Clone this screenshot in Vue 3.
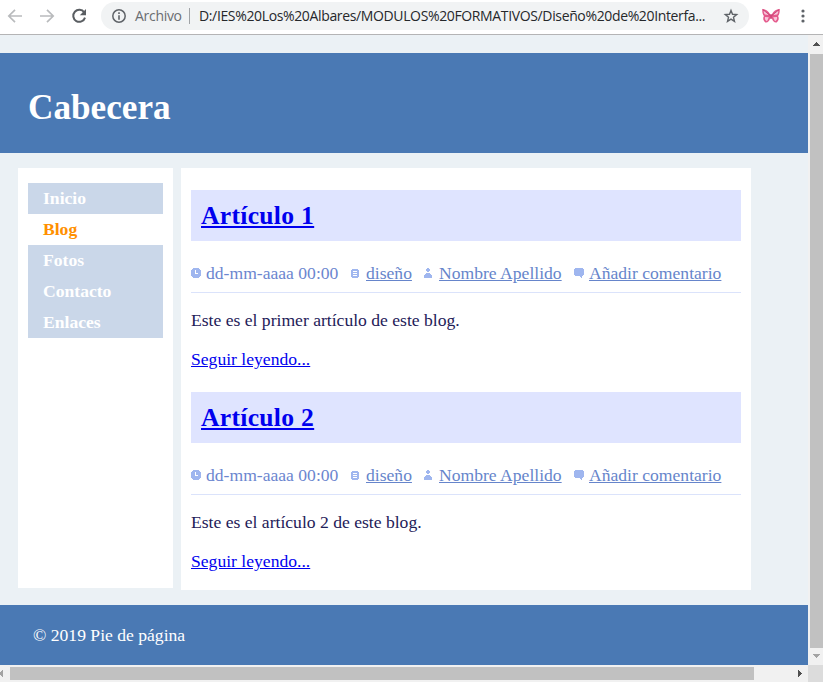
<script setup>
const menu = ['Inicio', 'Blog', 'Fotos', 'Contacto', 'Enlaces']
const articles = [
  { title: 'Artículo 1', text: 'Este es el primer artículo de este blog.' },
  { title: 'Artículo 2', text: 'Este es el artículo 2 de este blog.' },
]
</script>

<template>
  <div class="window">
    <div class="toolbar">
      <svg class="nav" viewBox="0 0 101 34" width="101" height="34" fill="none">
        <g stroke="#b9bbbd" stroke-width="1.7">
          <path d="M22 16H9.5M15 9.8 8.8 16l6.2 6.2" />
          <path d="M40 16h12.5M47 9.8l6.2 6.2-6.2 6.2" />
        </g>
        <path d="M84.2 12.4A6 6 0 1 0 85 17.6" stroke="#5a5e62" stroke-width="2" />
        <path d="M86 9v6.2h-6.2z" fill="#5a5e62" />
      </svg>
      <div class="address">
        <svg class="info" viewBox="0 0 14 14" width="14" height="14">
          <circle cx="7" cy="7" r="6.2" fill="none" stroke="#5f6368" stroke-width="1.5" />
          <path d="M6.2 3.3h1.6v1.6H6.2zM6.2 6.2h1.6v4.5H6.2z" fill="#5f6368" />
        </svg>
        <span class="scheme">Archivo</span>
        <span class="separator"></span>
        <span class="url">D:/IES%20Los%20Albares/MODULOS%20FORMATIVOS/Diseño%20de%20Interfa...</span>
        <svg class="star" viewBox="0 0 16 16" width="16" height="16">
          <path d="M8 2.4 9.500 6.300l4.200.3-3.200 2.700 1 4.100L8 11.200l-3.500 2.200 1-4.100L2.300 6.600l4.200-.3z" fill="none" stroke="#5f6368" stroke-width="1.4" />
        </svg>
      </div>
      <svg class="butterfly" viewBox="0 0 18 16" width="18" height="16">
        <path d="M8.300 6.500C6.500 3 3 .7.300 1.100c-.2 3 .3 5.500 1.600 6.900-1.400 2-.6 5 1.400 6.400 2 .8 4.300-1.500 4.800-4.200L9 11l.9-.8c.5 2.700 2.800 5 4.800 4.200 2-1.400 2.800-4.400 1.400-6.400 1.300-1.400 1.800-3.900 1.600-6.900C15 .7 11.500 3 9.700 6.500z" fill="#e45a8c" />
        <path d="M1.700 2.800c2 .4 3.800 2 5.100 4.300L3 6.500C2 5.500 1.700 4.300 1.700 2.800zM16.300 2.800c-2 .4-3.800 2-5.100 4.300l3.800-.6c1-1 1.300-2.200 1.300-3.700zM3 9l3.800.3L5 13.200C3.300 12.700 2.500 10.500 3 9zM15 9l-3.800.3 1.800 3.900c1.700-.5 2.500-2.700 2-4.200z" fill="#f9c6da" />
        <path d="m.8 1.600 7.500 6M17.200 1.600l-7.500 6M9 6v5" stroke="#c2366a" stroke-width=".8" fill="none" />
      </svg>
      <svg class="dots" viewBox="0 0 4 14" width="4" height="14" fill="#5f6368">
        <circle cx="2" cy="2" r="1.600" /><circle cx="2" cy="7" r="1.600" /><circle cx="2" cy="12" r="1.600" />
      </svg>
    </div>

    <div class="viewport">
      <div class="page">
        <header><h1>Cabecera</h1></header>
        <div class="content">
          <nav>
            <a v-for="item in menu" :key="item" :class="{ active: item === 'Blog' }">{{ item }}</a>
          </nav>
          <main>
            <article v-for="a in articles" :key="a.title">
              <h2><a href="#">{{ a.title }}</a></h2>
              <div class="meta">
                <span class="entry date">
                  <svg viewBox="0 0 10 10" width="10" height="10" shape-rendering="crispEdges">
                    <path d="M2 0h6v1h1v1h1v6H9v1H8v1H2V9H1V8H0V2h1V1h1z" fill="#9fb6ef" />
                    <path d="M4 2h1v3h2v1H4z" fill="#fff" />
                  </svg>
                  <span>dd-mm-aaaa 00:00</span>
                </span>
                <span class="entry tag">
                  <svg viewBox="0 0 10 10" width="10" height="10" shape-rendering="crispEdges">
                    <path d="M1 1h6v1h1v7H7v1H1V9H0V2h1z" fill="#9fb6ef" />
                    <path d="M2 3h4v1H2zM2 5h4v1H2zM2 7h4v1H2z" fill="#fff" />
                  </svg>
                  <a href="#">diseño</a>
                </span>
                <span class="entry author">
                  <svg viewBox="0 0 10 10" width="10" height="10" shape-rendering="crispEdges">
                    <path d="M3 0h2v1h1v2H5v1H3V3H2V1h1zM2 5h4v1h1v1h1v3H0V7h1V6h1z" fill="#9fb6ef" />
                  </svg>
                  <a href="#">Nombre Apellido</a>
                </span>
                <span class="entry comment">
                  <svg viewBox="0 0 10 10" width="10" height="10" shape-rendering="crispEdges">
                    <path d="M1 0h8v1h1v6H9v1H8v2H7V9H6V8H1V7H0V1h1z" fill="#9fb6ef" />
                  </svg>
                  <a href="#">Añadir comentario</a>
                </span>
              </div>
              <p>{{ a.text }}</p>
              <p class="more"><a href="#">Seguir leyendo...</a></p>
            </article>
          </main>
        </div>
        <footer>© 2019 Pie de página</footer>
      </div>
      <div class="vscroll">
        <svg viewBox="0 0 15 19" width="15" height="19" shape-rendering="crispEdges"><path d="M8 7h1v1h1v1h1v1h1v1H5v-1h1V9h1V8h1z" fill="#505050" /></svg>
        <div class="thumb"></div>
        <svg viewBox="0 0 15 17" width="15" height="17" shape-rendering="crispEdges"><path d="M5 6h7v1h-1v1h-1v1H9v1H8V9H7V8H6V7H5z" fill="#a3a3a3" /></svg>
      </div>
    </div>
    <div class="hscroll">
      <svg viewBox="0 0 10 17" width="10" height="17" shape-rendering="crispEdges"><path d="M3 5v7H2v-1H1v-1H0V7h1V6h1V5z" fill="#a3a3a3" /></svg>
      <div class="thumb"></div>
      <svg class="right" viewBox="0 0 15 17" width="15" height="17" shape-rendering="crispEdges"><path d="M5 5h1v1h1v1h1v1h1v1H8v1H7v1H6v1H5z" fill="#505050" /></svg>
      <div class="corner"></div>
    </div>
  </div>
</template>

<style>
body { margin: 0; overflow: hidden; }
</style>

<style scoped>
* { box-sizing: border-box; }
h1, h2, p { margin: 0; }
.window { width: 823px; height: 682px; display: flex; flex-direction: column; background: #fff; font: 17.6px/20px "Liberation Serif", serif; overflow: hidden; white-space: nowrap; }
.toolbar { height: 35px; flex: none; display: flex; align-items: flex-start; border-bottom: 1px solid #b4b4b5; font-family: "Open Sans", sans-serif; font-size: 14px; }
.nav { flex: none; }
.address { width: 648px; height: 28px; margin-top: 2px; flex: none; display: flex; align-items: center; border-radius: 14px; background: #f1f3f4; padding-left: 11px; }
.info { flex: none; }
.scheme { width: 54px; margin-left: 9px; color: #6a6d71; letter-spacing: -0.3px; }
.separator { width: 1px; height: 16px; background: #a0a3a6; }
.url { width: 524px; margin-left: 9px; color: #26282b; letter-spacing: -0.36px; }
.star { flex: none; }
.butterfly { margin: 8px 0 0 13px; flex: none; }
.dots { margin: 9px 0 0 21px; flex: none; }
.viewport { height: 630px; flex: none; display: flex; }
.page { width: 808px; background: #ebf1f5; padding-top: 18px; }
header { height: 100px; background: #4a79b4; color: #fff; padding: 35px 28px 0; }
h1 { font-size: 35.2px; line-height: 40px; }
.content { display: flex; align-items: flex-start; gap: 8px; padding: 15px 0 15px 18px; }
nav { width: 155px; height: 420px; background: #fff; padding: 15px 10px; }
nav a { display: block; height: 31px; line-height: 31px; padding-left: 15px; background: #cad7e9; color: #fff; font-weight: bold; }
nav a.active { background: #fff; color: #ff9000; }
main { width: 570px; height: 422px; background: #fff; padding: 22px 10px 0; }
article { height: 202px; }
h2 { height: 51px; padding: 10px; background: #dfe4ff; font-size: 25.6px; letter-spacing: 0.3px; line-height: 32px; }
h2 a, .more a { color: #0000ee; }
.meta { display: flex; height: 52px; padding-top: 22px; border-bottom: 1px solid #dbe3fb; color: #6b86cf; }
.meta a { color: #6685cb; }
.entry { display: flex; gap: 5px; }
.entry svg { flex: none; margin-top: 5px; }
.date { width: 160px; }
.tag { width: 73px; }
.author { width: 150px; }
p { margin-top: 17px; color: #1e2058; }
.more { margin-top: 19px; }
footer { height: 60px; padding: 20px 33px; background: #4a79b4; color: #fff; }
.vscroll { width: 15px; background: #f1f1f1; display: flex; flex-direction: column; }
.vscroll svg, .hscroll svg { flex: none; display: block; }
.vscroll .thumb { flex: 1; margin-left: 2px; background: #c1c1c1; }
.hscroll { height: 17px; display: flex; background: #f1f1f1; }
.hscroll .thumb { width: 744px; height: 13px; margin-top: 2px; background: #c1c1c1; }
.hscroll .right { margin-left: auto; }
.corner { width: 15px; height: 17px; background: #dcdcdc; }
</style>
